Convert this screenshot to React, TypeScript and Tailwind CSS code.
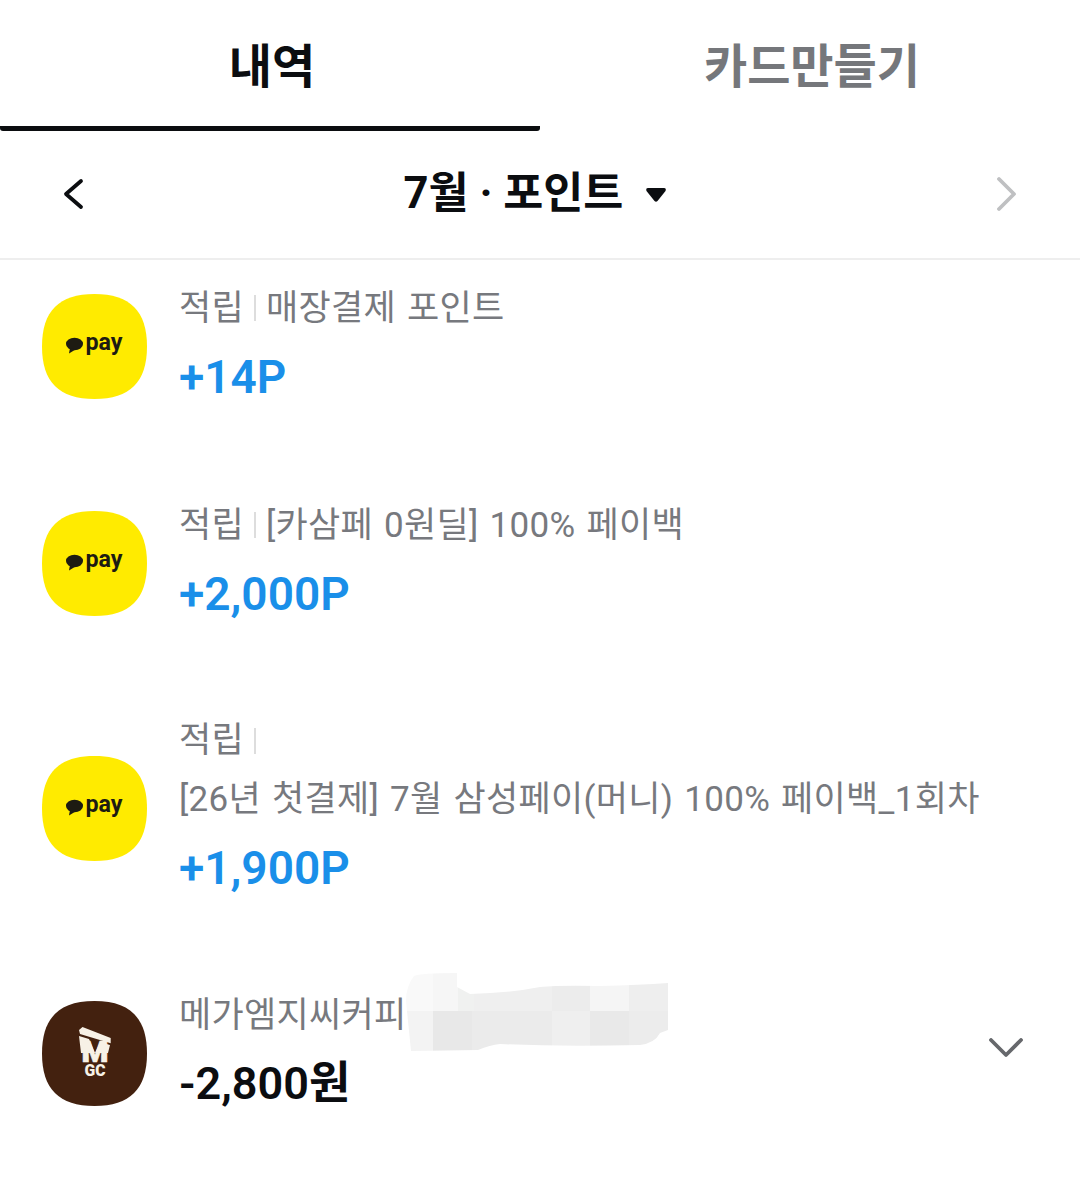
const font = { fontFamily: "Roboto, 'Noto Sans CJK KR', sans-serif" };

function Squircle({ fill }: { fill: string }) {
  return <path d="M52.5 0C88 0 105 17 105 52.5C105 88 88 105 52.5 105C17 105 0 88 0 52.5C0 17 17 0 52.5 0Z" fill={fill} />;
}

function PayIcon() {
  return (
    <svg width="105" height="105" viewBox="0 0 105 105" className="shrink-0">
      <Squircle fill="#ffeb00" />
      <ellipse cx="32.500" cy="50" rx="8.500" ry="6.200" fill="#1d1b12" />
      <path d="M28 54L27 59.500L33.500 55.500Z" fill="#1d1b12" />
      <text x="43.500" y="56" fontSize="23" fontWeight="700" fill="#1d1b12" fontFamily="Roboto, sans-serif" textLength="37" lengthAdjust="spacingAndGlyphs">pay</text>
    </svg>
  );
}

function MgcIcon() {
  return (
    <svg width="105" height="105" viewBox="0 0 105 105" className="shrink-0">
      <Squircle fill="#43210f" />
      <path d="M37 29L40.500 26L61 34L68.700 37L68.700 42.300L38 33Z" fill="#f7f1e6" />
      <path d="M37 35L47 38L53 52L58 41L68 44L66 52L39 52Z" fill="#f7f1e6" />
      <text x="53" y="61" textAnchor="middle" fontSize="30" fontWeight="900" fill="#f7f1e6" stroke="#f7f1e6" strokeWidth="0.6" fontFamily="Roboto, sans-serif" textLength="27" lengthAdjust="spacingAndGlyphs">M</text>
      <text x="53" y="75" textAnchor="middle" fontSize="17" fontWeight="900" fill="#f7f1e6" fontFamily="Roboto, sans-serif" textLength="21" lengthAdjust="spacingAndGlyphs">GC</text>
    </svg>
  );
}

function Chevron({ d, color, w, h }: { d: string; color: string; w: number; h: number }) {
  return (
    <svg width={w} height={h} viewBox={`0 0 ${w} ${h}`} fill="none">
      <path d={d} stroke={color} strokeWidth="3.800" strokeLinecap="round" strokeLinejoin="round" />
    </svg>
  );
}

function Mosaic() {
  const cells = [
    [400, 965, 33, 45, "#f9f9f9"], [433, 965, 25, 45, "#f6f6f6"], [458, 965, 16, 45, "#f0f1f0"], [474, 965, 78, 45, "#efefef"],
    [552, 965, 38, 45, "#ececec"], [590, 965, 39, 45, "#f5f5f5"], [629, 965, 41, 45, "#eeeeee"],
    [400, 1010, 33, 45, "#f3f3f3"], [433, 1010, 39, 45, "#e8e8e8"], [472, 1010, 80, 45, "#ebebeb"],
    [552, 1010, 38, 45, "#efefef"], [590, 1010, 39, 45, "#e9e9e9"], [629, 1010, 41, 45, "#ececec"],
  ] as const;
  return (
    <svg width="280" height="90" viewBox="400 965 280 90" className="absolute left-[400px] top-[-52px]">
      <clipPath id="patch">
        <path d="M411 1050L406 1000Q406 985 414 975Q420 972 457 972L457 986L470 993Q510 992 540 986Q560 984 600 985Q640 984 668 982L668 1029L660 1032Q655 1042 640 1044Q560 1046 500 1043Q490 1044 478 1049Z" />
      </clipPath>
      <g clipPath="url(#patch)">
        {cells.map(([x, y, w, h, c], i) => <rect key={i} x={x} y={y} width={w} height={h} fill={c} />)}
      </g>
    </svg>
  );
}

function Label({ children }: { children: React.ReactNode }) {
  return <div className="h-[59px] leading-[59px] text-[35px] text-[#77797e] whitespace-nowrap tracking-[0.3px] [word-spacing:2px]">{children}</div>;
}

function Earn({ title, amount, long }: { title: string; amount: string; long?: boolean }) {
  return (
    <div className={`flex items-center gap-8 pl-[42px] ${long ? "h-[273px]" : "h-[217px]"}`}>
      <PayIcon />
      <div className="pb-[9px]">
        <Label>
          <span className="inline-flex items-center">
            적립
            <span className="mx-[10px] inline-block h-[26px] w-[2px] bg-[#dddddd]" />
            {!long && title}
          </span>
        </Label>
        {long && <Label>{title}</Label>}
        <div className="mt-[10px] h-[58px] leading-[58px] text-[46px] font-semibold text-[#1a8fe9]">{amount}</div>
      </div>
    </div>
  );
}

export default function App() {
  return (
    <div className="h-[1188px] w-[1080px] overflow-hidden bg-white" style={font}>
      <div className="flex h-[131px]">
        <div className="flex w-[540px] items-start justify-center rounded-[3px] border-b-[5px] border-[#0b0d10] pl-[4px] pt-[36px] text-[47px] font-bold leading-[62px] text-[#0b0d10]">내역</div>
        <div className="flex w-[540px] items-start justify-center pl-[4px] pt-[36px] text-[47px] font-bold leading-[62px] text-[#75777b]">카드만들기</div>
      </div>
      <div className="flex h-[129px] items-center justify-between border-b-2 border-[#eeeeee] pb-[2px] pl-[62px] pr-[63px]">
        <Chevron w={24} h={32} d="M19 3L4 16L19 29" color="#0b0d10" />
        <div className="ml-[-12px] flex items-center text-[43.500px] font-bold leading-[56px] text-[#0b0d10]">
          <span>7월 · 포인트</span>
          <svg width="22" height="16" viewBox="0 0 22 16" className="ml-[22px] mt-[2px]"><path d="M3 1H19Q21.500 1 20.500 4L12.500 14Q11 15.500 9.500 14L1.500 4Q0.500 1 3 1Z" fill="#0b0d10" /></svg>
        </div>
        <Chevron w={20} h={36} d="M2 3L17 18L2 33" color="#bfc0c2" />
      </div>
      <div className="overflow-hidden">
        <div className="mt-[-22px]">
          <Earn title="매장결제 포인트" amount="+14P" />
          <Earn title="[카삼페 0원딜] 100% 페이백" amount="+2,000P" />
          <Earn long title="[26년 첫결제] 7월 삼성페이(머니) 100% 페이백_1회차" amount="+1,900P" />
          <div className="relative flex h-[217px] items-center gap-8 pl-[42px] pr-[57px]">
            <MgcIcon />
            <div className="pb-[9px]">
              <Label>메가엠지씨커피</Label>
              <div className="mt-[10px] h-[58px] leading-[58px] text-[45px] font-semibold text-[#0b0d10] whitespace-nowrap">-2,800원</div>
            </div>
            <div className="ml-auto mb-[12px]"><Chevron w={34} h={20} d="M2 2L17 17L32 2" color="#66686c" /></div>
            <div className="absolute left-0 top-[73px]"><Mosaic /></div>
          </div>
        </div>
      </div>
    </div>
  );
}
